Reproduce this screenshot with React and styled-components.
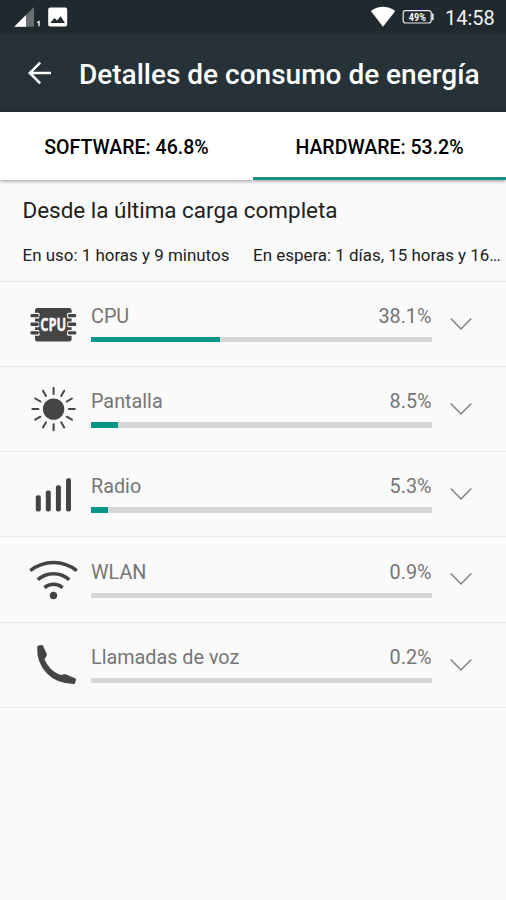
import React from 'react'
import styled, { createGlobalStyle } from 'styled-components'

const GlobalStyle = createGlobalStyle`
  * {
    box-sizing: border-box;
  }

  body {
    margin: 0;
    background: #fafafa;
    font-family: Roboto, 'Liberation Sans', sans-serif;
  }
`

const Screen = styled.div`
  width: 506px;
  height: 900px;
  overflow: hidden;
  background: #fafafa;
  color: #212121;
`

const StatusBar = styled.div`
  display: flex;
  justify-content: space-between;
  height: 34px;
  background: #20292e;

  svg {
    display: block;
  }
`

const StatusGroup = styled.div`
  display: flex;
  align-items: center;
`

const Clock = styled.span`
  width: 61px;
  font-size: 20px;
  line-height: 34px;
  color: #f1f3f4;
  padding-top: 1px;
`

const AppBar = styled.header`
  display: flex;
  align-items: center;
  height: 78px;
  padding-left: 27px;
  background: #263238;
  color: #fff;
`

const BackButton = styled.button`
  display: flex;
  width: 52px;
  padding: 0;
  border: none;
  background: transparent;
`

const Title = styled.h1`
  margin: 0;
  padding-top: 4px;
  font-size: 28px;
  font-weight: 500;
  line-height: 34px;
  white-space: nowrap;
`

const Tabs = styled.div`
  display: flex;
  height: 68px;
  background: #fff;
  box-shadow: 0 1px 4px rgba(0, 0, 0, 0.4);
`

const Tab = styled.button`
  flex: 1;
  padding: 5px 0 0;
  border: none;
  border-bottom: 3px solid ${p => (p.$active ? '#1a9080' : 'transparent')};
  background: transparent;
  font-family: inherit;
  font-size: 19.55px;
  font-weight: 500;
  color: #000;
`

const Summary = styled.section`
  height: 101.6px;
  padding: 17px 0 0 22.5px;
  border-bottom: 1px solid #e8e8e8;
`

const Heading = styled.h2`
  margin: 0;
  font-size: 22.45px;
  font-weight: 400;
  line-height: 27px;
`

const Times = styled.div`
  display: flex;
  margin-top: 21px;
  font-size: 16.95px;
  line-height: 20px;
  white-space: nowrap;
`

const Time = styled.span`
  flex: 0 0 230.5px;
`

const Row = styled.div`
  display: flex;
  height: 85.25px;
  padding-left: 24px;
  border-bottom: 1px solid #e8e8e8;

  svg {
    display: block;
    flex: none;
  }
`

const Usage = styled.div`
  width: 340.5px;
  margin: 0 0.5px 0 7px;
  padding-top: 23.3px;
`

const Labels = styled.div`
  display: flex;
  justify-content: space-between;
  font-size: 19.8px;
  line-height: 24px;
  color: #757575;
`

const Track = styled.div`
  height: 5.6px;
  margin-top: 8px;
  background: #d6d6d6;
`

const Fill = styled.div`
  height: 100%;
  background: #079587;
`

const DARK = '#444'

function CpuIcon() {
  return (
    <>
      <rect x="35" y="26" width="36.6" height="33.4" rx="2.5" fill={DARK} />
      {[33.6, 42.3, 50.9].map(y => (
        <g key={y}>
          <rect x="30" y={y - 2.9} width="9.6" height="5.8" rx="1.5" fill="#fafafa" />
          <rect x="67" y={y - 2.9} width="9.6" height="5.8" rx="1.5" fill="#fafafa" />
          <rect x="30.5" y={y - 1.7} width="8.2" height="3.4" rx="1" fill={DARK} />
          <rect x="68" y={y - 1.7} width="8.2" height="3.4" rx="1" fill={DARK} />
        </g>
      ))}
      <rect x="39.4" y="34" width="27.8" height="17" fill={DARK} />
      <text
        x="40.3"
        y="49"
        fontFamily="Open Sans"
        fontSize="18.6"
        fontWeight="700"
        textLength="26"
        lengthAdjust="spacingAndGlyphs"
        fill="#fafafa"
        stroke="#fafafa"
        strokeWidth="0.4"
      >
        CPU
      </text>
    </>
  )
}

function SunIcon() {
  return (
    <g transform="translate(53.6 42.1)" stroke={DARK} strokeWidth="2" strokeLinecap="round">
      <circle r="10.7" fill={DARK} stroke="none" />
      {Array.from({ length: 12 }, (_, i) => (
        <path key={i} d="M0-15.2V-21.2" transform={`rotate(${i * 30})`} />
      ))}
    </g>
  )
}

function BarsIcon() {
  return (
    <g fill={DARK}>
      <rect x="35.8" y="43.3" width="5" height="16.2" rx="2" />
      <rect x="45.8" y="38.5" width="5" height="21" rx="2" />
      <rect x="55.9" y="33.2" width="5" height="26.3" rx="2" />
      <rect x="66" y="26.3" width="5" height="33.2" rx="2" />
    </g>
  )
}

function WifiIcon() {
  return (
    <g fill="none" stroke={DARK} strokeWidth="3.5">
      <path d="M30.3 33.6A37 37 0 0 1 76.7 33.6" />
      <path d="M37.8 42.7A23.6 23.6 0 0 1 69.3 42.7" />
      <path d="M44.5 50.6A14.2 14.2 0 0 1 62.6 50.6" />
      <circle cx="53.5" cy="58.5" r="3.7" fill={DARK} stroke="none" />
    </g>
  )
}

function PhoneIcon() {
  return (
    <path
      d="M37.2 23.9Q37.4 22.9 38.6 22.6L41.5 22Q42.7 21.8 43.1 22.9L46.8 30.9Q47.1 32 46.5 32.9L44.5 36.3Q49 47.5 60.3 52.1L64.3 51.2Q65.3 50.9 66.2 51.4L75 55.2Q76.3 55.7 76 56.7L75.2 59.9Q74.9 60.9 73.6 60.9Q56 60.5 46.8 50.3Q36.5 39.5 37.2 23.9Z"
      fill={DARK}
    />
  )
}

const items = [
  { name: 'CPU', value: 38.1, Icon: CpuIcon },
  { name: 'Pantalla', value: 8.5, Icon: SunIcon },
  { name: 'Radio', value: 5.3, Icon: BarsIcon },
  { name: 'WLAN', value: 0.9, Icon: WifiIcon },
  { name: 'Llamadas de voz', value: 0.2, Icon: PhoneIcon },
]

function UsageRow({ name, value, Icon }) {
  // the bar only moves in whole percents
  const width = Math.floor(value)
  return (
    <Row>
      <svg width="60" height="84" viewBox="24 0 60 84" aria-hidden="true">
        <Icon />
      </svg>
      <Usage>
        <Labels>
          <span>{name}</span>
          <span>{value}%</span>
        </Labels>
        <Track>
          <Fill style={{ width: `${width}%` }} />
        </Track>
      </Usage>
      <svg width="60" height="84" viewBox="432 0 60 84" aria-hidden="true">
        <path d="M450.7 36.5L461 47L471.3 36.5" fill="none" stroke="#808080" strokeWidth="1.5" />
      </svg>
    </Row>
  )
}

function App() {
  const [tab, setTab] = React.useState('hardware')

  return (
    <>
      <GlobalStyle />
      <Screen>
        <StatusBar>
          <StatusGroup>
            <svg width="80" height="34" viewBox="0 0 80 34" aria-hidden="true">
              <path d="M34 7V26.7H14.3Z" fill="#697074" />
              <path d="M26 15V26.7H14.3Z" fill="#fff" />
              <path d="M37.2 22.5L39 21.5V26.3" fill="none" stroke="#fff" strokeWidth="1.3" />
              <rect x="48.2" y="7.6" width="19" height="18.8" rx="2" fill="#fff" />
              <path d="M50.3 23L54.5 18L57 20.4L60.6 16.3L65 23Z" fill="#20292e" />
            </svg>
          </StatusGroup>
          <StatusGroup>
            <svg width="77" height="34" viewBox="368 0 77 34" aria-hidden="true">
              <path d="M370.8 11Q383 2.6 395.3 11L383 26.7Z" fill="#fff" />
              <rect x="403.2" y="10.6" width="28" height="12.4" rx="2.5" fill="none" stroke="#e8eaeb" strokeWidth="1.2" />
              <path d="M432.7 13.5V20.2" stroke="#e8eaeb" strokeWidth="1.8" />
              <text
                x="408.8"
                y="20.6"
                fontSize="10"
                fontWeight="700"
                textLength="17"
                lengthAdjust="spacingAndGlyphs"
                fill="#fff"
              >
                49%
              </text>
            </svg>
            <Clock>14:58</Clock>
          </StatusGroup>
        </StatusBar>

        <AppBar>
          <BackButton aria-label="Atrás">
            <svg width="26" height="26" viewBox="27 60 26 26">
              <path d="M51 73H29.8M40.2 62.6L29.8 73L40.2 83.4" fill="none" stroke="#fff" strokeWidth="2.5" />
            </svg>
          </BackButton>
          <Title>Detalles de consumo de energía</Title>
        </AppBar>

        <Tabs>
          <Tab $active={tab === 'software'} onClick={() => setTab('software')}>
            SOFTWARE: 46.8%
          </Tab>
          <Tab $active={tab === 'hardware'} onClick={() => setTab('hardware')}>
            HARDWARE: 53.2%
          </Tab>
        </Tabs>

        <Summary>
          <Heading>Desde la última carga completa</Heading>
          <Times>
            <Time>En uso: 1 horas y 9 minutos</Time>
            <Time>En espera: 1 días, 15 horas y 16…</Time>
          </Times>
        </Summary>

        {items.map(item => (
          <UsageRow key={item.name} {...item} />
        ))}
      </Screen>
    </>
  )
}

export default App
